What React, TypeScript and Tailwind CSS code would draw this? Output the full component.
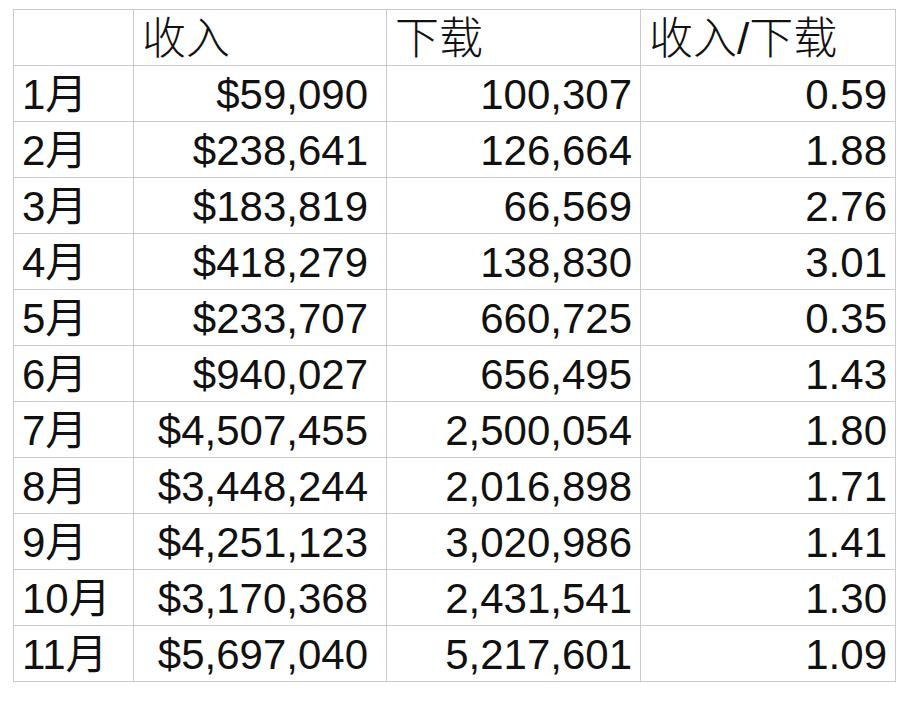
const rows: [string, string, string, string][] = [
  ["1月", "$59,090", "100,307", "0.59"],
  ["2月", "$238,641", "126,664", "1.88"],
  ["3月", "$183,819", "66,569", "2.76"],
  ["4月", "$418,279", "138,830", "3.01"],
  ["5月", "$233,707", "660,725", "0.35"],
  ["6月", "$940,027", "656,495", "1.43"],
  ["7月", "$4,507,455", "2,500,054", "1.80"],
  ["8月", "$3,448,244", "2,016,898", "1.71"],
  ["9月", "$4,251,123", "3,020,986", "1.41"],
  ["10月", "$3,170,368", "2,431,541", "1.30"],
  ["11月", "$5,697,040", "5,217,601", "1.09"],
];

const cell = "h-[56px] border border-[#c9c9cf] p-0 pt-[3px] align-middle";
// 表头的中文字稍大一些
const head = `${cell} pl-[8px] text-left text-[44px] font-light`;

export default function App() {
  return (
    <div
      className="min-h-[706px] w-[916px] bg-white pl-[13px] pt-[9px] text-[#111111]"
      style={{ fontFamily: '"Liberation Sans", "Noto Sans CJK SC", sans-serif' }}
    >
      <table className="table-fixed border-collapse text-[42px] leading-none">
        <colgroup>
          <col className="w-[120px]" />
          <col className="w-[253px]" />
          <col className="w-[254px]" />
          <col className="w-[255px]" />
        </colgroup>
        <thead>
          <tr>
            <th className={cell} />
            <th className={head}>收入</th>
            <th className={head}>下载</th>
            <th className={head}>收入/下载</th>
          </tr>
        </thead>
        <tbody>
          {rows.map(([month, revenue, downloads, ratio]) => (
            <tr key={month}>
              <td className={`${cell} pl-[8px] text-left`}>{month}</td>
              <td className={`${cell} pr-[18px] text-right`}>{revenue}</td>
              <td className={`${cell} pr-[8px] text-right`}>{downloads}</td>
              <td className={`${cell} pr-[8px] text-right`}>{ratio}</td>
            </tr>
          ))}
        </tbody>
      </table>
    </div>
  );
}
